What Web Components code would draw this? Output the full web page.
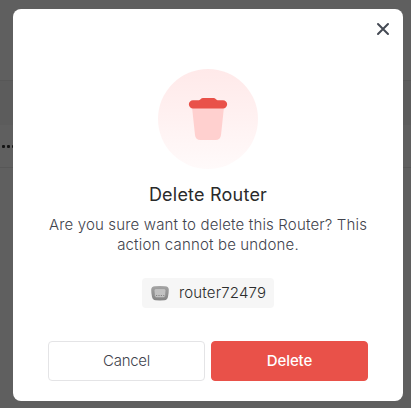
<!DOCTYPE html>
<html lang="en">
<head>
<meta charset="utf-8">
<title>Delete Router</title>
<style>
html,body{margin:0;height:100%;overflow:hidden;background:#5f5f5f;font-family:Inter,"Liberation Sans",sans-serif}
</style>
</head>
<body>
<app-shell>
  <confirm-dialog>
    <trash-badge slot="icon"></trash-badge>
    <span slot="title">Delete Router</span>
    <span slot="message">Are you sure want to delete this Router? This action cannot be undone.</span>
    <resource-chip slot="resource">router72479</resource-chip>
    <action-button slot="actions">Cancel</action-button>
    <action-button slot="actions" danger>Delete</action-button>
  </confirm-dialog>
</app-shell>
<script>
const define = (name, html) => customElements.define(name, class extends HTMLElement {
  constructor() {
    super();
    this.attachShadow({ mode: 'open' }).innerHTML = html;
  }
});

define('app-shell', `<style>
:host{display:grid;width:411px;height:408px;box-sizing:border-box;overflow:hidden;background:#5f5f5f}
.page,.overlay{grid-area:1/1;min-width:0;min-height:0}
.page{display:grid;grid-template-rows:80px 45px 43px 1fr}
.head{background:#5c5c5c;border-top:1px solid #575757}
.row{border-bottom:1px solid #575757;display:flex;align-items:center;gap:2px;padding-left:1.500px}
.row i{width:3px;height:3px;border-radius:1px;background:#141414}
.overlay{padding:9px 8px 7px 13px}
</style>
<div class="page"><div></div><div class="head"></div><div class="row"><i></i><i></i><i></i></div><div></div></div>
<div class="overlay"><slot></slot></div>`);

define('confirm-dialog', `<style>
:host{display:grid;grid-template-columns:390px;height:392px;box-sizing:border-box;background:#fff;border-radius:8px}
.close,.body{grid-area:1/1}
.close{justify-self:end;align-self:start;margin:13px 13px 0 0;width:14px;height:14px;padding:0;border:0;background:none;z-index:1}
.close svg{display:block}
.body{display:flex;flex-direction:column;align-items:center;padding:60px 30px 20px}
h2{margin:14px 0 0;font-weight:400;font-size:18px;letter-spacing:.22px;line-height:24px;color:#2a2a2a;white-space:nowrap}
p{margin:8px 0 0;width:326px;text-align:center;font-size:15px;font-weight:300;letter-spacing:.16px;line-height:20px;color:#41434d}
.resource{margin-top:23px}
.actions{display:grid;grid-template-columns:1fr 1fr;gap:6px;width:320px;margin-top:33px}
</style>
<button class="close" aria-label="Close"><svg width="14" height="14" viewBox="0 0 14 14"><path d="M2 2l10 10M12 2L2 12" stroke="#454a54" stroke-width="2" stroke-linecap="round"/></svg></button>
<div class="body">
<slot name="icon"></slot>
<h2><slot name="title"></slot></h2>
<p><slot name="message"></slot></p>
<div class="resource"><slot name="resource"></slot></div>
<div class="actions"><slot name="actions"></slot></div>
</div>`);

define('trash-badge', `<style>
:host{display:block;width:100px;height:100px;border-radius:50%;background:linear-gradient(#ffe9e9,#fffafa)}
svg{display:block}
</style>
<svg width="100" height="100" viewBox="0 0 100 100">
<path d="M34 38h32l-3 28q-.6 5-5.500 5h-15q-5 0-5.500-5z" fill="#ffd0cf"/>
<path d="M35 31.200h6q1-.2 1.800-1.200.8-1 2.200-1h10.500q1.400 0 2.200 1 .8 1 1.800 1.200H65a4.150 4.150 0 0 1 0 8.300H35a4.150 4.150 0 0 1 0-8.300z" fill="#e95149"/>
</svg>`);

define('resource-chip', `<style>
:host{display:flex;align-items:center;gap:10px;width:132px;height:30px;box-sizing:border-box;padding-left:9px;border-radius:4px;background:#f6f6f6;font-size:15px;font-weight:300;letter-spacing:.16px;line-height:20px;color:#2c2d2d}
svg{display:block;flex:none}
</style>
<svg width="18" height="16" viewBox="0 0 18 16">
<defs><linearGradient id="shell" x2="0" y2="1"><stop stop-color="#a4a4a4"/><stop offset="1" stop-color="#858585"/></linearGradient></defs>
<path d="M4 1.200Q9 .7 14 1.200q3.900.4 3.800 3.600 0 3.400-.8 7-.7 3.300-3.500 3.500-4.500.3-9 0-2.800-.2-3.500-3.500Q.200 8.200.2 4.800.1 1.600 4 1.200z" fill="url(#shell)"/>
<path d="M5 3.600h8q2.100 0 1.900 2l-.5 5q-.2 2-2.100 2H5.700q-1.900 0-2.100-2l-.5-5q-.2-2 1.900-2z" fill="#c2c2c2" stroke="#909090" stroke-width=".6"/>
<path d="M5 10.500h1.200M7.400 10.500h1.200M9.800 10.500H11M12.200 10.500h1.100" stroke="#858585"/>
</svg><span><slot></slot></span>`);

define('action-button', `<style>
:host{display:block}
button{display:block;width:100%;height:40px;padding:0;border:1px solid #e4e4e6;border-radius:4px;background:#fff;color:#41434d;font:300 15px/20px Inter,"Liberation Sans",sans-serif;letter-spacing:-.3px}
:host([danger]) button{background:#e95149;border-color:#e95149;color:#fff;font-weight:500;letter-spacing:-.1px}
</style>
<button><slot></slot></button>`);
</script>
</body>
</html>
